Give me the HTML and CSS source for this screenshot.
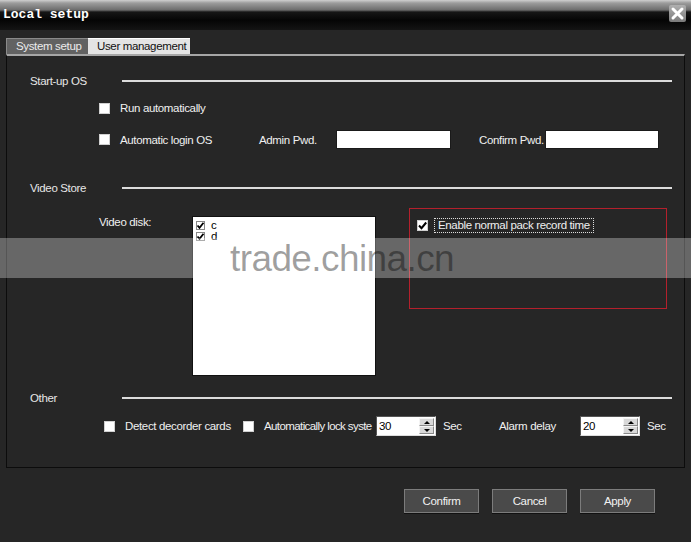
FILE: index.html
```html
<!DOCTYPE html>
<html lang="en">
<head>
    <meta charset="UTF-8">
    <title>Local setup</title>
    <link rel="stylesheet" href="styles.css">
</head>
<body>
    <div class="window">
        <div class="titlebar">
            <span class="title">Local setup</span>
            <span class="close">
                <svg width="17" height="17" viewBox="0 0 17 17"><path d="M4 4 L13 13 M13 4 L4 13" stroke="#fff" stroke-width="3" stroke-linecap="round"/></svg>
            </span>
        </div>

        <div class="tabs">
            <span class="tab tab-dark">System setup</span>
            <span class="tab tab-light">User management</span>
        </div>

        <div class="panel">
            <!-- Start-up OS -->
            <div class="section s-start"><span class="sec-name">Start-up OS</span><span class="rule"></span></div>
            <div class="row r-run">
                <label class="check"><span class="box"></span>Run automatically</label>
            </div>
            <div class="row r-login">
                <label class="check w-login"><span class="box"></span>Automatic login OS</label>
                <span class="lbl w-admin">Admin Pwd.</span>
                <span class="field f-admin"></span>
                <span class="lbl w-confirm">Confirm Pwd.</span>
                <span class="field f-confirm"></span>
            </div>

            <!-- Video Store -->
            <div class="section s-video"><span class="sec-name">Video Store</span><span class="rule"></span></div>
            <div class="row r-video">
                <span class="lbl w-disk">Video disk:</span>
                <div class="disk-list">
                    <div class="disk"><span class="mini on"><svg width="9" height="9" viewBox="0 0 9 9"><path d="M1.5 4.5 L3.5 6.8 L7.5 1.8" stroke="#000" stroke-width="1.8" fill="none"/></svg></span>c</div>
                    <div class="disk"><span class="mini on"><svg width="9" height="9" viewBox="0 0 9 9"><path d="M1.5 4.5 L3.5 6.8 L7.5 1.8" stroke="#000" stroke-width="1.8" fill="none"/></svg></span>d</div>
                </div>
                <div class="pack-box">
                    <label class="check"><span class="box"><svg width="11" height="11" viewBox="0 0 11 11"><path d="M2 5.5 L4.5 8.2 L9.2 2.5" stroke="#000" stroke-width="2" fill="none"/></svg></span><span class="focus">Enable normal pack record time</span></label>
                </div>
            </div>

            <!-- Other -->
            <div class="section s-other"><span class="sec-name">Other</span><span class="rule"></span></div>
            <div class="row r-other">
                <label class="check w-detect"><span class="box"></span>Detect decorder cards</label>
                <label class="check w-lock"><span class="box"></span>Automatically lock syste</label>
                <div class="spin">
                    <span class="spin-val">30</span>
                    <span class="spin-btns"><span class="up"></span><span class="down"></span></span>
                </div>
                <span class="lbl w-sec">Sec</span>
                <span class="lbl w-alarm">Alarm delay</span>
                <div class="spin">
                    <span class="spin-val">20</span>
                    <span class="spin-btns"><span class="up"></span><span class="down"></span></span>
                </div>
                <span class="lbl w-sec2">Sec</span>
            </div>
        </div>

        <div class="buttons">
            <button class="btn">Confirm</button>
            <button class="btn">Cancel</button>
            <button class="btn">Apply</button>
        </div>

        <div class="watermark">trade.china.cn</div>
    </div>
</body>
</html>
```

FILE: styles.css
```css
* {
    margin: 0;
    padding: 0;
    box-sizing: border-box;
}

body {
    font-family: "Liberation Sans", Arial, sans-serif;
    font-size: 11.5px;
    letter-spacing: -0.35px;
    background-color: #262626;
    color: #f0f0f0;
    width: 691px;
    height: 542px;
    overflow: hidden;
}

.window {
    position: relative;
    width: 691px;
    height: 542px;
}

/* title bar */
.titlebar {
    height: 30px;
    display: flex;
    justify-content: space-between;
    align-items: flex-start;
    background: linear-gradient(to bottom, #cfcfcf 0, #9c9c9c 3px, #6c6c6c 10px, #161616 12px, #050505 20px, #141414 30px);
}

.title {
    font-family: "Liberation Mono", "Courier New", monospace;
    font-weight: bold;
    font-size: 13px;
    letter-spacing: 0;
    color: #fff;
    margin: 8px 0 0 3px;
    line-height: 14px;
}

.close {
    width: 17px;
    height: 17px;
    margin: 5px 5px 0 0;
    background: linear-gradient(to bottom, #b0b0b0, #7a7a7a);
    border-radius: 2px;
    display: flex;
}

/* tabs */
.tabs {
    display: flex;
    margin: 8px 0 0 6px;
    height: 16px;
}

.tab {
    height: 16px;
    line-height: 16px;
    padding-left: 9px;
}

.tab-dark {
    width: 82px;
    background: #626262;
    color: #ececec;
    border-top: 1px solid #8a8a8a;
    border-left: 1px solid #8a8a8a;
    line-height: 15px;
}

.tab-light {
    width: 102px;
    background: #e4e4e4;
    color: #111;
    border-top: 1px solid #fff;
    line-height: 15px;
}

/* panel */
.panel {
    margin-left: 6px;
    width: 679px;
    height: 414px;
    border-top: 2px solid #a6a6a6;
    border-left: 1px solid #0c0c0c;
    border-right: 1px solid #0c0c0c;
    border-bottom: 1px solid #0c0c0c;
}

.section {
    display: flex;
    align-items: center;
    height: 16px;
    padding-left: 23px;
    padding-right: 12px;
}

.sec-name {
    width: 92px;
    color: #e6e6e6;
}

.rule {
    flex: 1;
    height: 2px;
    background: #dcdcdc;
    margin-top: -1px;
}

.s-start { margin-top: 17px; }
.s-video { margin-top: 31px; }
.s-other { margin-top: 14px; }

.row {
    display: flex;
    align-items: center;
    padding-left: 92px;
}

.r-run { margin-top: 11px; height: 16px; }
.r-login { margin-top: 14px; height: 19px; }
.r-video { margin-top: 12px; align-items: flex-start; }
.r-other { margin-top: 10px; height: 20px; padding-left: 97px; }

.check {
    display: flex;
    align-items: center;
    white-space: nowrap;
}

.box {
    width: 11px;
    height: 11px;
    background: #fff;
    border: 1px solid #d0d0d0;
    margin-right: 10px;
    display: flex;
    flex-shrink: 0;
}

.box svg {
    margin: -1px;
}

.lbl {
    white-space: nowrap;
}

.field {
    height: 19px;
    background: #fff;
    border: 1px solid #1a1a1a;
}

.w-login { width: 160px; }
.w-admin { width: 77px; }
.f-admin { width: 115px; margin-right: 28px; }
.w-confirm { width: 66px; }
.f-confirm { width: 114px; }

/* video store */
.w-disk {
    width: 93px;
    margin-top: 7px;
    line-height: 14px;
}

.disk-list {
    width: 184px;
    height: 160px;
    margin-top: 8px;
    background: #fff;
    border: 1px solid #111;
    padding: 3px 0 0 3px;
    color: #000;
}

.disk {
    display: flex;
    align-items: center;
    height: 11px;
    line-height: 11px;
}

.mini {
    width: 9px;
    height: 9px;
    border: 1px solid #888;
    margin-right: 6px;
    display: flex;
}

.mini svg {
    margin: -1px;
}

.pack-box {
    width: 258px;
    height: 101px;
    margin-left: 33px;
    border: 1px solid #b4202c;
    padding: 9px 0 0 7px;
}

.focus {
    border: 1px dotted #ddd;
    padding: 0 3px;
    margin-left: -4px;
    line-height: 13px;
}

/* other */
.w-detect { width: 139px; }
.w-lock { width: 133px; letter-spacing: -0.6px; }

.spin {
    width: 60px;
    height: 20px;
    background: #fff;
    border: 1px solid #555;
    border-right-color: #ddd;
    border-bottom-color: #ddd;
    display: flex;
    align-items: center;
    justify-content: space-between;
    color: #000;
    padding: 0 1px 0 2px;
}

.spin-btns {
    width: 15px;
    height: 16px;
    display: flex;
    flex-direction: column;
}

.up, .down {
    flex: 1;
    background: #d8d8d8;
    border: 1px solid #f4f4f4;
    border-right-color: #888;
    border-bottom-color: #888;
    display: flex;
    align-items: center;
    justify-content: center;
}

.up::after {
    content: "";
    border-left: 3px solid transparent;
    border-right: 3px solid transparent;
    border-bottom: 3px solid #000;
}

.down::after {
    content: "";
    border-left: 3px solid transparent;
    border-right: 3px solid transparent;
    border-top: 3px solid #000;
}

.w-sec { width: 56px; margin-left: 7px; }
.w-alarm { width: 81px; }
.w-sec2 { margin-left: 7px; }

/* buttons */
.buttons {
    display: flex;
    gap: 13px;
    margin-top: 21px;
    padding-left: 404px;
}

.btn {
    width: 75px;
    height: 24px;
    background: #4a4a4a;
    border: 1px solid #7c7c7c;
    color: #f2f2f2;
    font-family: "Liberation Sans", Arial, sans-serif;
    font-size: 11.5px;
    letter-spacing: -0.35px;
    box-shadow: 0 1px 0 #111;
}

/* watermark from the source image */
.watermark {
    position: absolute;
    left: 0;
    top: 238px;
    width: 691px;
    height: 40px;
    background: rgba(255, 255, 255, 0.3);
    color: rgba(0, 0, 0, 0.38);
    font-size: 37px;
    letter-spacing: -0.6px;
    line-height: 42px;
    padding-left: 230px;
}
```
